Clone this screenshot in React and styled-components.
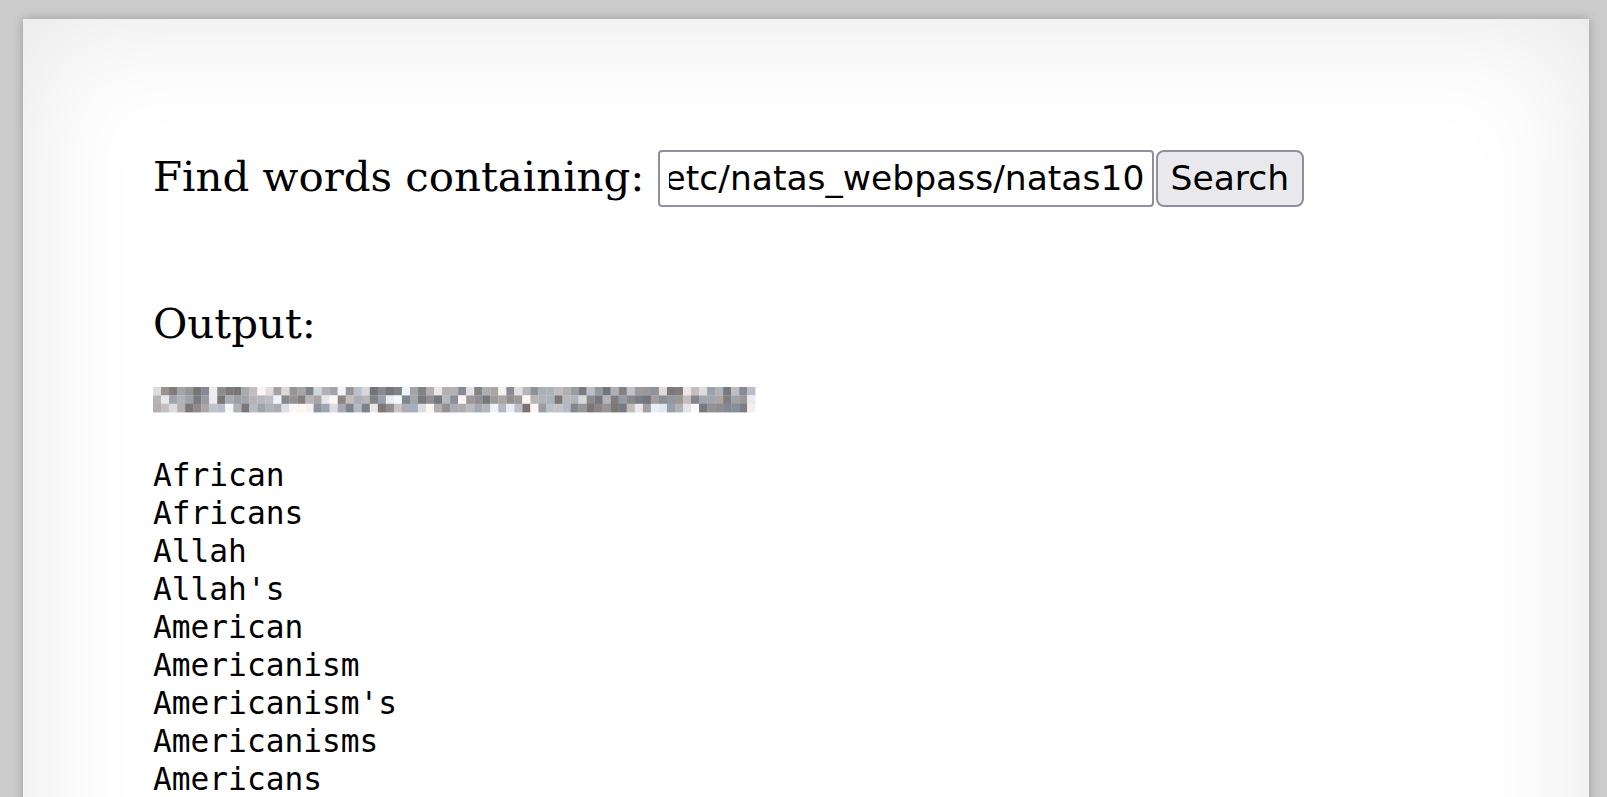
import React, { useLayoutEffect, useRef } from 'react';
import styled, { createGlobalStyle } from 'styled-components';

const GlobalStyle = createGlobalStyle`
  html, body {
    margin: 0;
    padding: 0;
    background: #ccc;
    overflow: hidden;
  }
  body {
    font-family: "DejaVu Serif", "Liberation Serif", serif;
    color: #000;
  }
`;

const Page = styled.div`
  padding: 19px 18px 0 23px;
`;

const Content = styled.div`
  background: #fff;
  box-shadow: 0 0 10px rgba(0, 0, 0, 0.25), inset 0 0 120px rgba(0, 0, 0, 0.1);
  padding: 130.5px 130px 120px;
  min-height: 900px;
`;

const Form = styled.form`
  margin: 0;
  font-size: 41.9px;
  line-height: normal;
  white-space: nowrap;
`;

const Needle = styled.input`
  box-sizing: border-box;
  width: 496px;
  height: 57px;
  padding: 0 7px 0 9px;
  margin: 0;
  border: 2px solid #8f8f9d;
  border-radius: 4px;
  background: #fff;
  color: #000;
  font-family: "DejaVu Sans", "Liberation Sans", sans-serif;
  font-size: 34.5px;
  vertical-align: baseline;
  outline: none;
`;

const SearchButton = styled.button`
  box-sizing: border-box;
  width: 148px;
  height: 57px;
  margin: 0 0 0 2px;
  padding: 0 10px;
  border: 2px solid #8f8f9d;
  border-radius: 8px;
  background: #e9e9ed;
  color: #000;
  font-family: "DejaVu Sans", "Liberation Sans", sans-serif;
  font-size: 34.5px;
  vertical-align: baseline;
`;

const OutputLabel = styled.div`
  margin-top: 92.5px;
  font-size: 41.9px;
  line-height: normal;
`;

const WordList = styled.pre`
  margin: 32px 0 0;
  font-family: "DejaVu Sans Mono", "Liberation Mono", monospace;
  font-size: 31.2px;
  line-height: 38px;
`;

const RedactedLine = styled.div`
  height: 38px;
  box-sizing: border-box;
  padding-top: 7px;

  svg {
    display: block;
  }
`;

const words = [
  'African', 'Africans', 'Allah', "Allah's", 'American', 'Americanism',
  "Americanism's", 'Americanisms', 'Americans', 'Amerind', 'Amerindian',
  "Amerindian's", 'Amerindians', 'Amerinds', 'Amish',
];

// pixelated password, drawn as a mosaic of grey blocks
let seed = 20231;
const rand = () => {
  seed = (seed * 16807) % 2147483647;
  return seed / 2147483647;
};
const mosaic = [];
for (let row = 0; row < 3; row++) {
  for (let col = 0; col < 75; col++) {
    const light = rand() < 0.2;
    const v = Math.round(light ? 215 + rand() * 35 : 115 + rand() * 80);
    const t = Math.round((rand() - 0.5) * 14);
    mosaic.push({
      x: col * 8.03,
      y: row * 8.4,
      fill: `rgb(${Math.min(255, v + t)},${v},${Math.min(255, v - t + 4)})`,
    });
  }
}

const Redacted = () => (
  <svg width="603" height="26" viewBox="0 0 603 26">
    {mosaic.map((b, i) => (
      <rect key={i} x={b.x} y={b.y} width="8.2" height="8.6" fill={b.fill} />
    ))}
  </svg>
);

const App = () => {
  const needleRef = useRef(null);

  useLayoutEffect(() => {
    const el = needleRef.current;
    if (el) el.scrollLeft = el.scrollWidth;
  }, []);

  return (
    <Page>
      <GlobalStyle />
      <Content>
        <Form onSubmit={(e) => e.preventDefault()}>
          Find words containing: <Needle ref={needleRef} name="needle" defaultValue=".* /etc/natas_webpass/natas10" /><SearchButton type="submit">Search</SearchButton>
        </Form>

        <OutputLabel>Output:</OutputLabel>
        <WordList>
          <RedactedLine>
            <Redacted />
          </RedactedLine>
          {'\n' + words.join('\n')}
        </WordList>
      </Content>
    </Page>
  );
};

export default App;
